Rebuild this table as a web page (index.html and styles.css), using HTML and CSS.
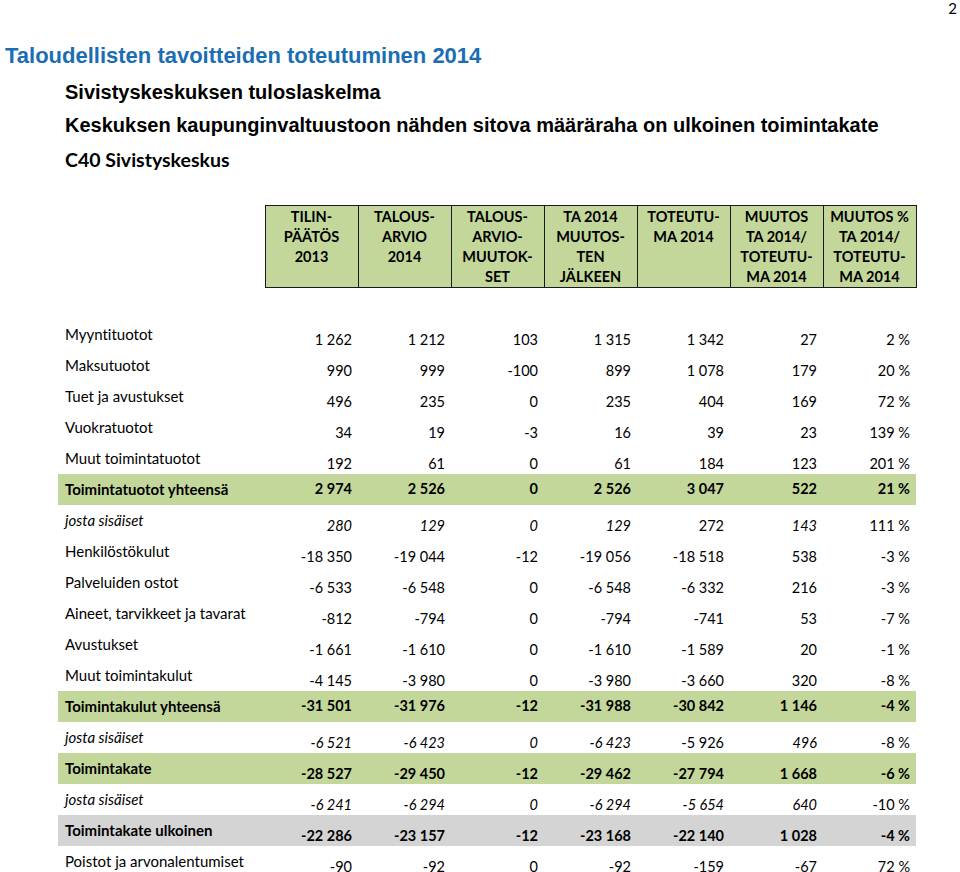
FILE: index.html
```html
<!DOCTYPE html>
<html lang="fi">
<head>
<meta charset="utf-8">
<title>Taloudellisten tavoitteiden toteutuminen 2014</title>
<link rel="stylesheet" href="styles.css">
</head>
<body>
<div class="page-num">2</div>
<h1 class="title">Taloudellisten tavoitteiden toteutuminen 2014</h1>
<h2 class="sub sub-first">Sivistyskeskuksen tuloslaskelma</h2>
<h2 class="sub">Keskuksen kaupunginvaltuustoon nähden sitova määräraha on ulkoinen toimintakate</h2>
<h3 class="unit">C40 Sivistyskeskus</h3>

<table class="report">
  <colgroup>
    <col class="c-label">
    <col class="c-num"><col class="c-num"><col class="c-num"><col class="c-num"><col class="c-num"><col class="c-num"><col class="c-num">
  </colgroup>
  <thead>
    <tr class="head">
      <th class="blank"></th>
      <th>TILIN-<br>PÄÄTÖS<br>2013</th>
      <th>TALOUS-<br>ARVIO<br>2014</th>
      <th>TALOUS-<br>ARVIO-<br>MUUTOK-<br>SET</th>
      <th>TA 2014<br>MUUTOS-<br>TEN<br>JÄLKEEN</th>
      <th>TOTEUTU-<br>MA 2014</th>
      <th>MUUTOS<br>TA 2014/<br>TOTEUTU-<br>MA 2014</th>
      <th>MUUTOS %<br>TA 2014/<br>TOTEUTU-<br>MA 2014</th>
    </tr>
  </thead>
  <tbody>
    <tr class="spacer"><td colspan="8"></td></tr>
    <tr><td class="lbl">Myyntituotot</td><td>1 262</td><td>1 212</td><td>103</td><td>1 315</td><td>1 342</td><td>27</td><td>2 %</td></tr>
    <tr><td class="lbl">Maksutuotot</td><td>990</td><td>999</td><td>-100</td><td>899</td><td>1 078</td><td>179</td><td>20 %</td></tr>
    <tr><td class="lbl">Tuet ja avustukset</td><td>496</td><td>235</td><td>0</td><td>235</td><td>404</td><td>169</td><td>72 %</td></tr>
    <tr><td class="lbl">Vuokratuotot</td><td>34</td><td>19</td><td>-3</td><td>16</td><td>39</td><td>23</td><td>139 %</td></tr>
    <tr><td class="lbl">Muut toimintatuotot</td><td>192</td><td>61</td><td>0</td><td>61</td><td>184</td><td>123</td><td>201 %</td></tr>
    <tr class="sum green mid"><td class="lbl">Toimintatuotot yhteensä</td><td>2 974</td><td>2 526</td><td>0</td><td>2 526</td><td>3 047</td><td>522</td><td>21 %</td></tr>
    <tr><td class="lbl it">josta sisäiset</td><td class="it">280</td><td class="it">129</td><td class="it">0</td><td class="it">129</td><td>272</td><td class="it">143</td><td>111 %</td></tr>
    <tr><td class="lbl">Henkilöstökulut</td><td>-18 350</td><td>-19 044</td><td>-12</td><td>-19 056</td><td>-18 518</td><td>538</td><td>-3 %</td></tr>
    <tr><td class="lbl">Palveluiden ostot</td><td>-6 533</td><td>-6 548</td><td>0</td><td>-6 548</td><td>-6 332</td><td>216</td><td>-3 %</td></tr>
    <tr><td class="lbl">Aineet, tarvikkeet ja tavarat</td><td>-812</td><td>-794</td><td>0</td><td>-794</td><td>-741</td><td>53</td><td>-7 %</td></tr>
    <tr><td class="lbl">Avustukset</td><td>-1 661</td><td>-1 610</td><td>0</td><td>-1 610</td><td>-1 589</td><td>20</td><td>-1 %</td></tr>
    <tr><td class="lbl">Muut toimintakulut</td><td>-4 145</td><td>-3 980</td><td>0</td><td>-3 980</td><td>-3 660</td><td>320</td><td>-8 %</td></tr>
    <tr class="sum green mid"><td class="lbl">Toimintakulut yhteensä</td><td>-31 501</td><td>-31 976</td><td>-12</td><td>-31 988</td><td>-30 842</td><td>1 146</td><td>-4 %</td></tr>
    <tr><td class="lbl it">josta sisäiset</td><td class="it">-6 521</td><td class="it">-6 423</td><td class="it">0</td><td class="it">-6 423</td><td>-5 926</td><td class="it">496</td><td>-8 %</td></tr>
    <tr class="sum green"><td class="lbl">Toimintakate</td><td>-28 527</td><td>-29 450</td><td>-12</td><td>-29 462</td><td>-27 794</td><td>1 668</td><td>-6 %</td></tr>
    <tr><td class="lbl it">josta sisäiset</td><td class="it">-6 241</td><td class="it">-6 294</td><td class="it">0</td><td class="it">-6 294</td><td class="it">-5 654</td><td class="it">640</td><td>-10 %</td></tr>
    <tr class="sum gray"><td class="lbl">Toimintakate ulkoinen</td><td>-22 286</td><td>-23 157</td><td>-12</td><td>-23 168</td><td>-22 140</td><td>1 028</td><td>-4 %</td></tr>
    <tr><td class="lbl">Poistot ja arvonalentumiset</td><td>-90</td><td>-92</td><td>0</td><td>-92</td><td>-159</td><td>-67</td><td>72 %</td></tr>
  </tbody>
</table>
</body>
</html>
```

FILE: styles.css
```css
html, body {
  margin: 0;
  padding: 0;
  background: #ffffff;
  color: #000000;
}

body {
  width: 960px;
  height: 872px;
  overflow: hidden;
  font-family: "Lato", "Open Sans", sans-serif;
  font-variant-ligatures: none;
}

.page-num {
  font-family: "Lato", sans-serif;
  font-size: 15px;
  line-height: 16px;
  height: 15px;
  text-align: right;
  padding-right: 3px;
}

.title {
  margin: 29px 0 0 5px;
  font-family: "Liberation Sans", Arial, sans-serif;
  font-weight: bold;
  font-size: 22px;
  line-height: 24px;
  color: #1b6eb4;
}

.sub {
  margin: 11px 0 0 65px;
  font-family: "Liberation Sans", Arial, sans-serif;
  font-weight: bold;
  font-size: 20px;
  line-height: 22px;
}

.sub-first {
  margin-top: 13px;
}

.unit {
  margin: 12px 0 0 65px;
  font-family: "Lato", sans-serif;
  font-weight: bold;
  font-size: 19.5px;
  line-height: 24px;
}

.report {
  margin: 33px 0 0 58px;
  width: 858px;
  table-layout: fixed;
  border-collapse: collapse;
  font-family: "Lato", sans-serif;
  font-size: 14.5px;
}

.c-label { width: 207px; }
.c-num { width: 93px; }

.head th {
  height: 80px;
  padding: 1px 0 0;
  border: 1px solid #1a1a1a;
  background: #c4d79b;
  font-weight: bold;
  font-size: 14.5px;
  line-height: 20px;
  text-align: center;
  vertical-align: top;
}

.head th.blank {
  border: none;
  background: none;
}

.report tbody tr {
  height: 31px;
}

.report tbody .spacer td {
  padding: 0;
}

.report tbody td {
  padding: 0 6px 0 0;
  line-height: 20px;
  text-align: right;
  vertical-align: bottom;
  white-space: nowrap;
}

.report tbody td.lbl {
  padding: 5px 0 0 7px;
  font-size: 15px;
  text-align: left;
  vertical-align: top;
}

.report tbody td.it {
  font-style: italic;
}

.report tbody .sum td {
  font-weight: bold;
}

.report tbody .mid td,
.report tbody .mid td.lbl {
  vertical-align: middle;
  padding-top: 0;
}

.report tbody .green td {
  background: #c4d79b;
}

.report tbody .gray td {
  background: #d4d4d4;
}
```
